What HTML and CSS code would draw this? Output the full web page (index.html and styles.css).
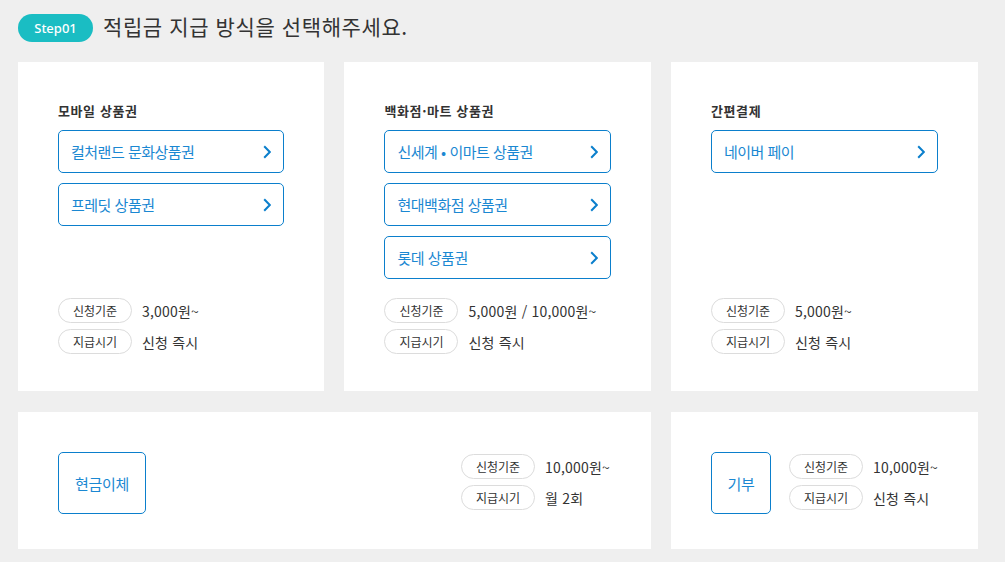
FILE: index.html
```html
<!DOCTYPE html>
<html lang="ko">
<head>
<meta charset="utf-8">
<title>적립금 지급 방식</title>
<link rel="stylesheet" href="styles.css">
</head>
<body>
<div class="page">
  <header class="head">
    <span class="step">Step01</span>
    <h1 class="head-title">적립금 지급 방식을 선택해주세요.</h1>
  </header>
  <main class="grid">
    <section class="card">
      <h2 class="card-title">모바일 상품권</h2>
      <div class="btns">
        <a class="opt">컬처랜드 문화상품권<svg class="chev" viewBox="0 0 8 14"><polyline points="1.2,1.2 6.8,7 1.2,12.8"/></svg></a>
        <a class="opt">프레딧 상품권<svg class="chev" viewBox="0 0 8 14"><polyline points="1.2,1.2 6.8,7 1.2,12.8"/></svg></a>
      </div>
      <dl class="info">
        <div class="row"><dt class="pill">신청기준</dt><dd class="val">3,000원~</dd></div>
        <div class="row"><dt class="pill">지급시기</dt><dd class="val">신청 즉시</dd></div>
      </dl>
    </section>
    <section class="card">
      <h2 class="card-title">백화점·마트 상품권</h2>
      <div class="btns">
        <a class="opt">신세계 • 이마트 상품권<svg class="chev" viewBox="0 0 8 14"><polyline points="1.2,1.2 6.8,7 1.2,12.8"/></svg></a>
        <a class="opt">현대백화점 상품권<svg class="chev" viewBox="0 0 8 14"><polyline points="1.2,1.2 6.8,7 1.2,12.8"/></svg></a>
        <a class="opt">롯데 상품권<svg class="chev" viewBox="0 0 8 14"><polyline points="1.2,1.2 6.8,7 1.2,12.8"/></svg></a>
      </div>
      <dl class="info">
        <div class="row"><dt class="pill">신청기준</dt><dd class="val">5,000원 / 10,000원~</dd></div>
        <div class="row"><dt class="pill">지급시기</dt><dd class="val">신청 즉시</dd></div>
      </dl>
    </section>
    <section class="card">
      <h2 class="card-title">간편결제</h2>
      <div class="btns">
        <a class="opt">네이버 페이<svg class="chev" viewBox="0 0 8 14"><polyline points="1.2,1.2 6.8,7 1.2,12.8"/></svg></a>
      </div>
      <dl class="info">
        <div class="row"><dt class="pill">신청기준</dt><dd class="val">5,000원~</dd></div>
        <div class="row"><dt class="pill">지급시기</dt><dd class="val">신청 즉시</dd></div>
      </dl>
    </section>
    <section class="card card-wide card-span">
      <a class="box box-cash">현금이체</a>
      <dl class="info info-right">
        <div class="row"><dt class="pill">신청기준</dt><dd class="val">10,000원~</dd></div>
        <div class="row"><dt class="pill">지급시기</dt><dd class="val">월 2회</dd></div>
      </dl>
    </section>
    <section class="card card-wide">
      <a class="box box-give">기부</a>
      <dl class="info info-side">
        <div class="row"><dt class="pill">신청기준</dt><dd class="val">10,000원~</dd></div>
        <div class="row"><dt class="pill">지급시기</dt><dd class="val">신청 즉시</dd></div>
      </dl>
    </section>
  </main>
</div>
</body>
</html>
```
FILE: styles.css
```css
* { box-sizing: border-box; }
html, body { margin: 0; padding: 0; }
body {
  background: #efefef;
  font-family: "Noto Sans CJK KR", "Noto Sans", sans-serif;
  color: #333;
}
.page {
  width: 1005px;
  padding: 14px 27px 0 18px;
}
.head {
  display: flex;
  align-items: center;
  height: 28px;
  margin-bottom: 20px;
}
.step {
  display: flex;
  align-items: center;
  justify-content: center;
  width: 75px;
  height: 28px;
  border-radius: 14px;
  background: #1abdc3;
  color: #fff;
  font-family: "Noto Sans", sans-serif;
  font-size: 13px;
  font-weight: 500;
  letter-spacing: 0;
}
.head-title {
  margin: 0 0 0 10px;
  font-size: 21px;
  font-weight: 400;
  line-height: 28px;
  color: #333;
  letter-spacing: 0.6px;
  position: relative;
  top: -2px;
}
.grid {
  display: grid;
  grid-template-columns: repeat(3, 1fr);
  column-gap: 20px;
  row-gap: 21px;
  width: 960px;
}
.card {
  background: #fff;
  display: flex;
  flex-direction: column;
  padding: 40px 40px 37px;
  min-height: 329px;
}
.card-title {
  margin: 0 0 10px;
  font-size: 13px;
  font-weight: 700;
  line-height: 18px;
  color: #333;
  letter-spacing: 0.6px;
}
.btns {
  display: flex;
  flex-direction: column;
  gap: 10px;
}
.opt {
  display: flex;
  align-items: center;
  justify-content: space-between;
  height: 43px;
  padding: 0 12px 0 12px;
  border: 1px solid #0b7fcc;
  border-radius: 5px;
  color: #1b88d2;
  font-size: 15px;
  letter-spacing: -0.5px;
  text-decoration: none;
}
.chev {
  width: 8px;
  height: 14px;
  fill: none;
  stroke: #0b7fcc;
  stroke-width: 2;
}
.info {
  margin: auto 0 0;
  padding-top: 19px;
  display: flex;
  flex-direction: column;
  gap: 6px;
}
.row {
  display: flex;
  align-items: center;
  gap: 10px;
}
.pill {
  display: flex;
  align-items: center;
  justify-content: center;
  flex: none;
  width: 74px;
  height: 25px;
  border: 1px solid #dcdcdc;
  border-radius: 13px;
  font-size: 12px;
  color: #333;
}
.val {
  margin: 0;
  font-size: 14px;
  color: #333;
  letter-spacing: 0.2px;
  white-space: nowrap;
}
.card-wide {
  min-height: 0;
  flex-direction: row;
  align-items: center;
  padding: 40px 40px 35px;
}
.card-span { grid-column: span 2; }
.box {
  display: flex;
  align-items: center;
  justify-content: center;
  height: 62px;
  border: 1px solid #0b7fcc;
  border-radius: 5px;
  color: #1b88d2;
  font-size: 15px;
  letter-spacing: -0.3px;
  flex: none;
}
.box-cash { width: 88px; }
.box-give { width: 60px; }
.info-right, .info-side {
  margin: 0;
  padding-top: 0;
  position: relative;
  top: -1px;
  flex: none;
}
.info-right { margin-left: auto; min-width: 150px; }
.info-side { margin-left: 18px; }
```
